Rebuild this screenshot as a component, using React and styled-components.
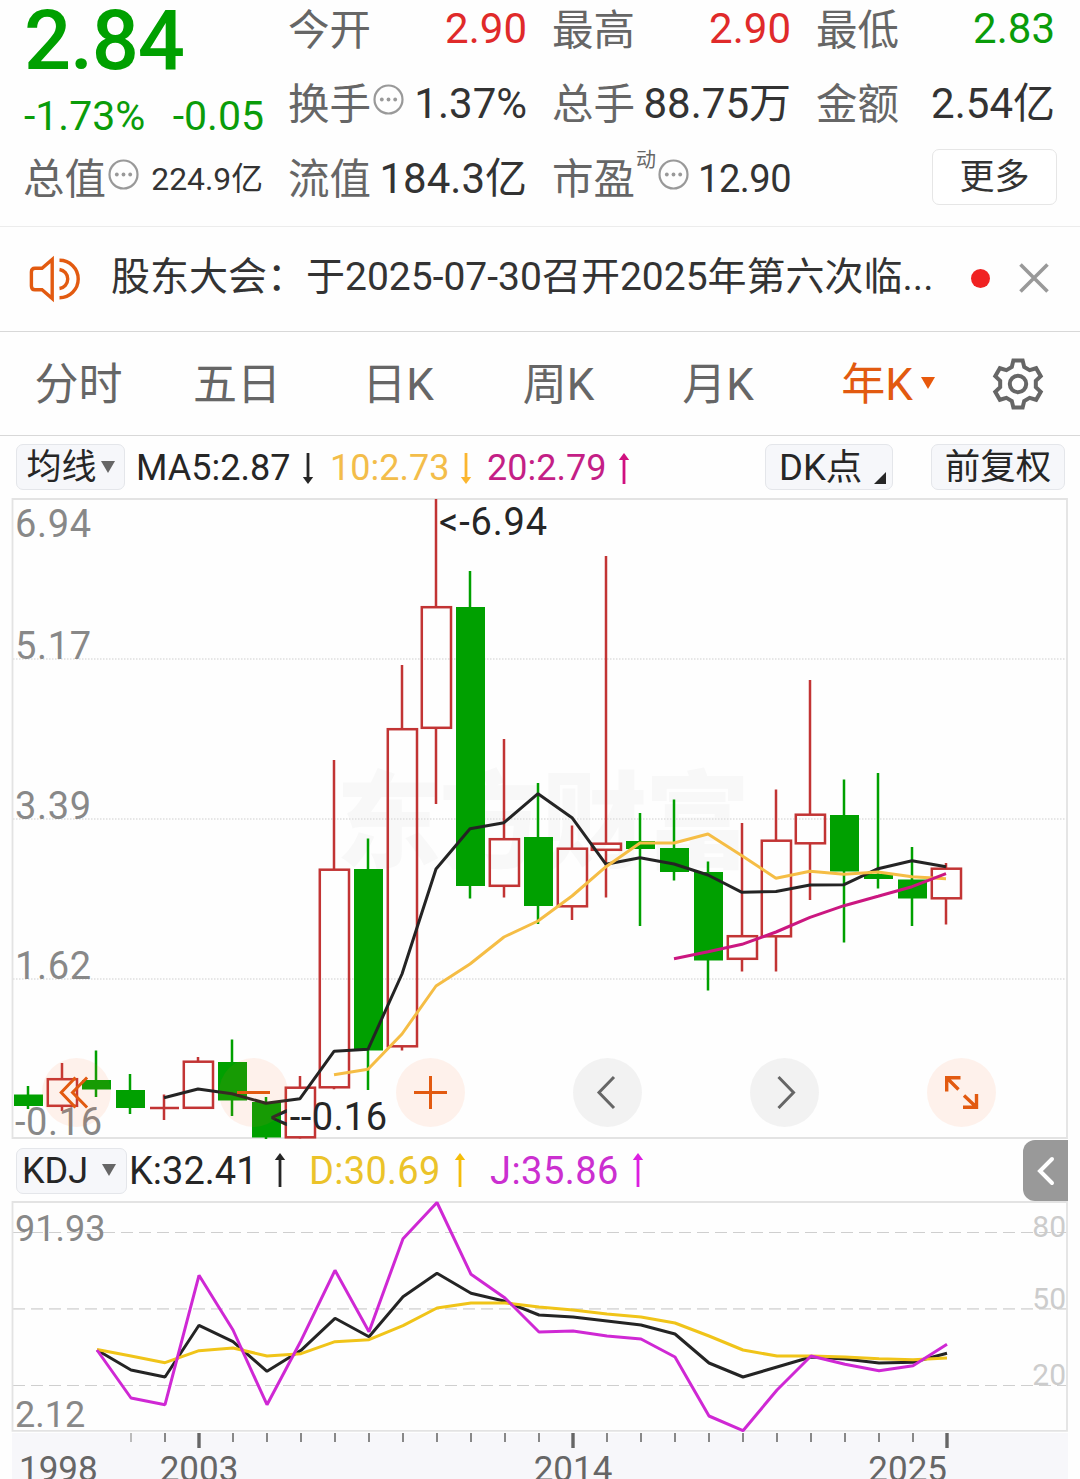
import React from "react";
import styled, { createGlobalStyle } from "styled-components";

const GREEN = "#00a000";
const TEXT_GREEN = "#0a9c0a";
const RED = "#e02a2a";
const ORANGE = "#e25a10";

const GlobalStyle = createGlobalStyle`
  * { box-sizing: border-box; }
  body {
    margin: 0;
    background: #fff;
    font-family: Roboto, "Noto Sans CJK SC", sans-serif;
    color: #333;
  }
  svg { display: block; flex: none; overflow: visible; }
`;

const Page = styled.div`
  width: 1080px;
  height: 1479px;
  overflow: hidden;
  display: flex;
  flex-direction: column;
  background: #fefefe;
`;

/* ---------- quote header ---------- */
const Quote = styled.section`
  display: grid;
  grid-template-columns: 239px 238px 238px 238px;
  grid-template-rows: 66px 75px 75px;
  column-gap: 26px;
  height: 227px;
  padding: 0 24px;
  border-bottom: 1px solid #ececec;
`;

const PriceBlock = styled.div`
  grid-row: 1 / span 2;
  display: flex;
  flex-direction: column;
  color: ${GREEN};
`;

const Price = styled.div`
  height: 82px;
  line-height: 82px;
  font-size: 83px;
  font-weight: 500;
  letter-spacing: -1.2px;
`;

const Change = styled.div`
  display: flex;
  justify-content: space-between;
  width: 240px;
  padding-top: 9px;
  font-size: 41px;
  line-height: 51px;
  color: ${TEXT_GREEN};
`;

const Cell = styled.div`
  display: flex;
  align-items: center;
  height: ${(p) => (p.$first ? 58 : 75)}px;
  white-space: nowrap;
`;

const Label = styled.span`
  margin: ${(p) => (p.$low ? 4 : 2)}px 0 0 -1px;
  font-size: 41.5px;
  line-height: 56px;
  color: #666;
`;

const Value = styled.span`
  margin-left: auto;
  font-size: ${(p) => p.$size || 42}px;
  line-height: 56px;
  letter-spacing: ${(p) => p.$spacing || 0}px;
  color: ${(p) => p.$color || "#333"};
`;

const Sup = styled.span`
  align-self: flex-start;
  margin: 7px 0 0 1px;
  font-size: 20px;
  line-height: 24px;
  color: #666;
`;

const InfoIcon = styled.svg`
  margin: -8px 0 0 2px;
`;

const MoreButton = styled.button`
  margin: -4px -2px 0 auto;
  width: 125px;
  height: 56px;
  padding: 0;
  border: 1.5px solid #e6e6e6;
  border-radius: 7px;
  background: #fff;
  font: 400 35px/55px Roboto, "Noto Sans CJK SC", sans-serif;
  color: #333;
`;

/* ---------- notice ---------- */
const Notice = styled.section`
  display: flex;
  align-items: center;
  height: 105px;
  padding: 0 29px 0 29px;
  border-bottom: 1px solid #d8d8d8;
`;

const NoticeText = styled.div`
  flex: none;
  width: 830px;
  margin: -5px 0 0 30px;
  font-size: 39px;
  line-height: 56px;
  white-space: nowrap;
  color: #333;
`;

const Dot = styled.span`
  flex: none;
  width: 19px;
  height: 19px;
  margin: -2px 29px 0 30px;
  border-radius: 50%;
  background: #f02222;
`;

/* ---------- period tabs ---------- */
const Tabs = styled.nav`
  display: flex;
  align-items: center;
  justify-content: space-between;
  height: 104px;
  padding-right: 35px;
  border-bottom: 1px solid #d8d8d8;
`;

const TabList = styled.div`
  display: flex;
  padding-top: 3px;
`;

const Tab = styled.div`
  display: flex;
  align-items: center;
  justify-content: center;
  width: ${(p) => p.$width || 160}px;
  font-size: 44px;
  line-height: 60px;
  color: ${(p) => (p.$active ? ORANGE : "#666")};
`;

const Caret = styled.span`
  border: ${(p) => p.$half || 7}px solid transparent;
  border-top: ${(p) => p.$tall || 12}px solid ${(p) => p.$color || "#666"};
  border-bottom: 0;
  margin: ${(p) => p.$lift || 0}px 0 0 ${(p) => p.$gap || 0}px;
`;

/* ---------- indicator rows ---------- */
const IndicatorRow = styled.div`
  display: flex;
  align-items: center;
  height: ${(p) => p.$height}px;
  padding: ${(p) => p.$pad};
`;

const Chip = styled.button`
  flex: none;
  display: flex;
  align-items: center;
  justify-content: ${(p) => p.$justify || "center"};
  width: ${(p) => p.$width}px;
  height: 46px;
  margin-left: ${(p) => p.$gap || 0}px;
  padding: ${(p) => p.$pad || 0};
  border: 1.5px solid #e4e6ea;
  border-radius: 7px;
  background: #f6f7fa;
  font: 400 ${(p) => p.$size || 35.5}px/44px Roboto, "Noto Sans CJK SC", sans-serif;
  color: #262626;
  white-space: nowrap;
`;

const ChipText = styled.span`
  padding-top: ${(p) => p.$drop || 0}px;
`;

const Corner = styled.span`
  align-self: flex-end;
  margin: 0 0 5px 12px;
  border-left: 12px solid transparent;
  border-bottom: 12px solid #262626;
`;

const Reading = styled.span`
  flex: none;
  display: flex;
  align-items: center;
  width: ${(p) => p.$width}px;
  margin-left: ${(p) => p.$indent || 0}px;
  padding-top: ${(p) => p.$drop || 0}px;
  font-size: ${(p) => p.$size}px;
  letter-spacing: ${(p) => p.$spacing || 0}px;
  line-height: 46px;
  color: ${(p) => p.$color};
  white-space: nowrap;
`;

const ArrowSvg = styled.svg`
  margin: ${(p) => p.$lift || 0}px 0 0 ${(p) => p.$gap}px;
`;

const SideTab = styled.button`
  display: flex;
  align-items: center;
  justify-content: center;
  width: 45px;
  height: 61px;
  margin-left: auto;
  padding: 0;
  border: 0;
  border-radius: 12px 0 0 12px;
  background: #999;
`;

/* ---------- charts ---------- */
const ChartPanel = styled.div`
  position: relative;
  height: ${(p) => p.$height}px;
`;

const FloatBar = styled.div`
  position: absolute;
  left: 42px;
  right: 84px;
  bottom: 13px;
  display: flex;
  justify-content: space-between;
`;

const RoundButton = styled.button`
  width: 69px;
  height: 69px;
  padding: 0;
  border: 0;
  border-radius: 50%;
  background: ${(p) => (p.$neutral ? "rgba(120,120,120,0.09)" : "rgba(250,112,40,0.09)")};
`;

const TimeAxis = styled.div`
  height: 46px;
  margin-left: 12px;
  width: 1056px;
  background: #f7f7fa;
`;

const X0 = 28;
const STEP = 34;

// kind, high, body top, body bottom, low (plot coordinates)
const CANDLES = [
  ["g", 1086, 1094.5, 1106, 1109],
  ["r", 1063, 1078, 1107, 1111],
  ["g", 1050.5, 1080, 1089.5, 1097],
  ["g", 1074, 1090, 1108, 1114],
  ["x", 1094.5, 1108, 1108, 1120],
  ["r", 1057, 1060.5, 1109, 1109],
  ["g", 1039.5, 1062, 1100.5, 1116],
  ["g", 1097, 1102, 1137.5, 1139],
  ["r", 1076, 1086.5, 1138.5, 1138.5],
  ["r", 760, 868.5, 1088.5, 1089.3],
  ["g", 838.5, 869, 1050.5, 1090],
  ["r", 665, 728, 1047.5, 1050.5],
  ["r", 499, 606, 729, 804],
  ["g", 571, 607, 886, 898.5],
  ["r", 739, 838, 887, 897.5],
  ["g", 783, 837, 906, 924],
  ["r", 825.5, 847.5, 907.5, 920],
  ["r", 556, 842.5, 851, 897.5],
  ["g", 813, 841, 849, 926],
  ["g", 799.5, 848, 872, 880.5],
  ["g", 861.5, 872, 960.5, 990.5],
  ["r", 823, 935, 960, 971.5],
  ["r", 789.5, 839.5, 937.5, 971.5],
  ["r", 680, 813.5, 844.5, 900],
  ["g", 779.5, 815, 871.5, 942.5],
  ["g", 773, 874, 879, 888.5],
  ["g", 847, 879.5, 898.5, 926],
  ["r", 863, 867.5, 899.5, 924.5],
];

const MA5 = [1097.7, 1089, 1093.7, 1103.3, 1098.7, 1051.3, 1049.3, 974, 869, 828.7, 822.7, 793.7, 817.7, 864.3, 857.7, 864, 875, 892.3, 891.5, 885, 884.7, 868.7, 860.7, 866.7];
const MA10 = [1074.7, 1069.3, 1034, 986, 964, 937, 921, 896, 866.7, 843, 843, 834, 855.7, 878.3, 871.3, 874.3, 872, 876.7, 878.7];
const MA20 = [958.7, 951.7, 944.3, 932, 917.3, 905.7, 896.3, 886.7, 873.7];

const K = [1350, 1370, 1377, 1325.3, 1341.7, 1371.3, 1350.3, 1318.3, 1336.7, 1296.7, 1273.3, 1293.3, 1301.3, 1315, 1317, 1321, 1325, 1334, 1363, 1377, 1367, 1357, 1359, 1363, 1362.3, 1353.3];
const D = [1349.5, 1356, 1362.7, 1350.7, 1348, 1356, 1353.7, 1341.7, 1339.7, 1325.7, 1308, 1303, 1303, 1307, 1310, 1314, 1317, 1323, 1336, 1350, 1356, 1356, 1357, 1358.7, 1359.7, 1358];
const J = [1350, 1398, 1404.7, 1275.3, 1330, 1404.7, 1340.7, 1270.3, 1331.7, 1238.7, 1202.5, 1274.3, 1298, 1332, 1331, 1336, 1339, 1357, 1416, 1430.7, 1390, 1356, 1364.3, 1370.7, 1365.7, 1344.3];

const points = (ys, startX) => ys.map((y, i) => `${startX + i * STEP},${y}`).join(" ");

function Series({ ys, from, color, width = 3 }) {
  return <polyline points={points(ys, from)} fill="none" stroke={color} strokeWidth={width} strokeLinejoin="bevel" />;
}

function Candle({ x, data: [kind, high, top, bottom, low] }) {
  if (kind === "g") {
    return (
      <g fill={GREEN}>
        <rect x={x - 1.25} y={high} width="2.5" height={low - high} />
        <rect x={x - 14} y={top} width="29" height={bottom - top} />
      </g>
    );
  }
  if (kind === "x") {
    return <path d={`M${x} ${high}V${low}M${x - 14} ${top}H${x + 15}`} stroke="#c23434" strokeWidth="2.5" />;
  }
  return (
    <g stroke="#c23434" strokeWidth="2.5" fill="none">
      <path d={`M${x} ${high}V${top + 1}M${x} ${bottom - 1}V${low}`} />
      <rect x={x - 14.2} y={top + 1.2} width="29.2" height={bottom - top - 2.4} />
    </g>
  );
}

function ChartText({ x, y, size, color, anchor, length, children }) {
  return (
    <text x={x} y={y} fontSize={size} fill={color} textAnchor={anchor} textLength={length} fontFamily="Roboto, sans-serif">
      {children}
    </text>
  );
}

function PriceChart() {
  return (
    <svg width="1080" height="642" viewBox="0 498 1080 642">
      <text x="336" y="859" fontSize="105" fontWeight="900" fill="#f8f8f8" textLength="414" fontFamily='"Noto Sans CJK SC", sans-serif'>
        东方财富
      </text>
      {[659, 819, 979].map((y) => (
        <path key={y} d={`M13 ${y}H1067`} stroke="#dedede" strokeWidth="1.4" strokeDasharray="1.5 1.5" />
      ))}
      <path d="M12.5 499H1067V1138H12.5Z" fill="none" stroke="#e3e3e3" strokeWidth="1.8" />
      {CANDLES.map((c, i) => (
        <Candle key={i} x={X0 + i * STEP} data={c} />
      ))}
      <Series ys={MA5} from={164} color="#242424" />
      <Series ys={MA10} from={334} color="#f5bd45" />
      <Series ys={MA20} from={674} color="#cb1780" />
      <ChartText x={15} y={537} size={38} length={76} color="#888">6.94</ChartText>
      <ChartText x={15} y={659} size={38} length={76} color="#888">5.17</ChartText>
      <ChartText x={15} y={819} size={38} length={76} color="#888">3.39</ChartText>
      <ChartText x={15} y={979} size={38} length={76} color="#888">1.62</ChartText>
      <ChartText x={15} y={1135} size={38} length={87} color="#888">-0.16</ChartText>
      <ChartText x={439} y={535} size={38} color="#262626" length={108}>{"<-6.94"}</ChartText>
      <ChartText x={270} y={1130} size={38} color="#262626" length={117}>{"<--0.16"}</ChartText>
    </svg>
  );
}

function KdjChart() {
  return (
    <svg width="1080" height="232" viewBox="0 1201 1080 232">
      <path d="M13 1232.5H1067M13 1385.5H1067" stroke="#cfcfcf" strokeWidth="1.2" strokeDasharray="12 6" />
      <path d="M13 1308.8H1067" stroke="#dcdcdc" strokeWidth="1.8" strokeDasharray="12 6" />
      <path d="M12.5 1202H1067V1430.8H12.5Z" fill="none" stroke="#e3e3e3" strokeWidth="1.8" />
      <ChartText x={15} y={1241} size={36} color="#888">91.93</ChartText>
      <ChartText x={15} y={1427} size={36} color="#888">2.12</ChartText>
      <ChartText x={1066} y={1237} size={30} color="#ccc" anchor="end">80</ChartText>
      <ChartText x={1066} y={1309} size={30} color="#ccc" anchor="end">50</ChartText>
      <ChartText x={1066} y={1385} size={30} color="#ccc" anchor="end">20</ChartText>
      <Series ys={K} from={97} color="#242424" />
      <Series ys={D} from={97} color="#f0c419" />
      <Series ys={J} from={97} color="#cf28d4" />
    </svg>
  );
}

function YearAxis() {
  const ticks = Array.from({ length: 25 }, (_, i) => 131 + i * STEP);
  const major = [199, 573, 947];
  return (
    <TimeAxis>
      <svg width="1056" height="46" viewBox="12 1433 1056 46">
        {ticks.map((x) =>
          major.includes(x) ? (
            <path key={x} d={`M${x} 1433V1448`} stroke="#666" strokeWidth="3.4" />
          ) : (
            <path key={x} d={`M${x} 1433V1442`} stroke={x === 131 ? "#bbb" : "#888"} strokeWidth="2" />
          )
        )}
        <ChartText x={19} y={1480.5} size={35} color="#666">1998</ChartText>
        <ChartText x={199} y={1480.5} size={35} color="#666" anchor="middle">2003</ChartText>
        <ChartText x={573} y={1480.5} size={35} color="#666" anchor="middle">2014</ChartText>
        <ChartText x={947} y={1480.5} size={35} color="#666" anchor="end">2025</ChartText>
      </svg>
    </TimeAxis>
  );
}

function Info() {
  return (
    <InfoIcon width="31" height="31" viewBox="0 0 31 31">
      <circle cx="15.5" cy="15.5" r="14" fill="none" stroke="#999" strokeWidth="2.2" />
      <g fill="#999">
        <circle cx="8.8" cy="15.5" r="1.9" />
        <circle cx="15.5" cy="15.5" r="1.9" />
        <circle cx="22.2" cy="15.5" r="1.9" />
      </g>
    </InfoIcon>
  );
}

function Arrow({ up, color, gap, lift, height = 31 }) {
  return (
    <ArrowSvg $gap={gap} $lift={lift} width="12" height={height} viewBox={`0 0 12 ${height}`}>
      <g transform={up ? undefined : `rotate(180 6 ${height / 2})`}>
        <path d={`M6 4V${height}`} stroke={color} strokeWidth="2.8" />
        <path d="M6 0L11.2 7H0.8Z" fill={color} />
      </g>
    </ArrowSvg>
  );
}

function Gear() {
  const r = (x, y, a) => {
    const t = (a * Math.PI) / 180;
    return `${(x * Math.cos(t) - y * Math.sin(t)).toFixed(2)} ${(x * Math.sin(t) + y * Math.cos(t)).toFixed(2)}`;
  };
  const d = [0, 60, 120, 180, 240, 300]
    .map((a) => [[-6.2, -17], [-4.6, -23.6], [4.6, -23.6], [6.2, -17]].map(([x, y]) => r(x, y, a)).join("L"))
    .join("L");
  return (
    <svg width="54" height="54" viewBox="-27 -27 54 54" fill="none" stroke="#666" strokeWidth="4">
      <path d={`M${d}Z`} />
      <circle r="8.2" />
    </svg>
  );
}

function Float({ neutral, d, width = 3 }) {
  return (
    <RoundButton $neutral={neutral}>
      <svg width="69" height="69" viewBox="-34.5 -34.5 69 69">
        <path d={d} fill="none" stroke={neutral ? "#666" : ORANGE} strokeWidth={width} />
      </svg>
    </RoundButton>
  );
}

export default function App() {
  return (
    <Page>
      <GlobalStyle />
      <Quote>
        <PriceBlock>
          <Price>2.84</Price>
          <Change>
            <span>-1.73%</span>
            <span>-0.05</span>
          </Change>
        </PriceBlock>
        <Cell $first><Label $low>今开</Label><Value $color={RED}>2.90</Value></Cell>
        <Cell $first><Label $low>最高</Label><Value $color={RED}>2.90</Value></Cell>
        <Cell $first><Label $low>最低</Label><Value $color={TEXT_GREEN}>2.83</Value></Cell>
        <Cell><Label>换手</Label><Info /><Value>1.37%</Value></Cell>
        <Cell><Label>总手</Label><Value>88.75万</Value></Cell>
        <Cell><Label>金额</Label><Value>2.54亿</Value></Cell>
        <Cell><Label>总值</Label><Info /><Value $size={31.8}>224.9亿</Value></Cell>
        <Cell><Label>流值</Label><Value>184.3亿</Value></Cell>
        <Cell><Label>市盈</Label><Sup>动</Sup><Info /><Value $size={38} $spacing={-0.5}>12.90</Value></Cell>
        <Cell><MoreButton>更多</MoreButton></Cell>
      </Quote>

      <Notice>
        <svg width="52" height="46" viewBox="0 0 52 46" fill="none" stroke={ORANGE} strokeWidth="3.4">
          <path d="M23.2 3.5V42.5L13 33.8H6Q2.4 33.8 2.4 30V16Q2.4 12.2 6 12.2H13Z" />
          <path d="M30.5 4.3A18.3 18.3 0 0 1 30.5 41.7M30.5 13.5A9.6 9.6 0 0 1 30.5 32.5" />
        </svg>
        <NoticeText>股东大会：于2025-07-30召开2025年第六次临...</NoticeText>
        <Dot />
        <svg width="30" height="30" viewBox="0 0 30 30">
          <path d="M1.5 0.5L28.5 27.5M28.5 0.5L1.5 27.5" stroke="#999" strokeWidth="3.6" />
        </svg>
      </Notice>

      <Tabs>
        <TabList>
          <Tab $width={157}>分时</Tab>
          <Tab>五日</Tab>
          <Tab $width={162}>日K</Tab>
          <Tab $width={159}>周K</Tab>
          <Tab>月K</Tab>
          <Tab $active $width={180}>年K<Caret $gap={8} $half={7.5} $tall={12.5} $lift={-4} $color="#e8590c" /></Tab>
        </TabList>
        <Gear />
      </Tabs>

      <IndicatorRow $height={62} $pad="0 15px 0 16px">
        <Chip $width={109} $size={35}><ChipText $drop={2}>均线</ChipText><Caret $gap={4} $tall={12} /></Chip>
        <Reading $width={194} $size={36} $color="#262626" $indent={11} $drop={2}>MA5:2.87<Arrow gap={12} color="#262626" /></Reading>
        <Reading $width={157} $size={36} $color="#f3bd4a" $drop={2}>10:2.73<Arrow gap={11} color="#fbb62f" /></Reading>
        <Reading $width={150} $size={36} $color="#c41f86" $drop={2}>20:2.79<Arrow up gap={12} color="#d0107f" /></Reading>
        <Chip $width={128} $gap={128} $justify="flex-start" $pad="0 0 0 13px" $size={36.5}><ChipText $drop={1}>DK点</ChipText><Corner /></Chip>
        <Chip $width={134} $gap={38}><ChipText>前复权</ChipText></Chip>
      </IndicatorRow>

      <ChartPanel $height={642}>
        <PriceChart />
        <FloatBar>
          <Float d="M-1 -15L-15.3 0L-1 15M10.6 -15L-4 0L10.6 15" />
          <Float d="M-16.5 0H16.5" />
          <Float d="M-16.5 0H16.5M0 -16.5V16.5" />
          <Float neutral d="M6.5 -15.5L-8.5 0L6.5 15.5" />
          <Float neutral d="M-6 -15.5L9 0L-6 15.5" />
          <Float width={3.4} d="M-1 -14.8H-14.8V-1M-14.8 -14.8L-3 -3M1.5 14.8H15V1.5M15 14.8L2.5 3" />
        </FloatBar>
      </ChartPanel>

      <IndicatorRow $height={61} $pad="0 12px 0 16px">
        <Chip $width={111} $size={36} $justify="flex-start" $pad="0 0 0 5px">KDJ<Caret $gap={14} $half={7.5} $tall={12} $lift={-1} /></Chip>
        <Reading $width={180} $size={38} $color="#262626" $indent={2}>K:32.41<Arrow up gap={16} lift={-2} height={34} color="#262626" /></Reading>
        <Reading $width={181} $size={38} $spacing={0.3} $color="#ebc32a">D:30.69<Arrow up gap={13} lift={-2} height={34} color="#f5bd0a" /></Reading>
        <Reading $width={170} $size={38} $spacing={0.45} $color="#cb2fd0">J:35.86<Arrow up gap={13} lift={-2} height={34} color="#dc1fe0" /></Reading>
        <SideTab>
          <svg width="20" height="30" viewBox="0 0 20 30">
            <path d="M16 3L4 15L16 27" fill="none" stroke="#fff" strokeWidth="4" strokeLinecap="round" />
          </svg>
        </SideTab>
      </IndicatorRow>

      <ChartPanel $height={232}>
        <KdjChart />
      </ChartPanel>
      <YearAxis />
    </Page>
  );
}
